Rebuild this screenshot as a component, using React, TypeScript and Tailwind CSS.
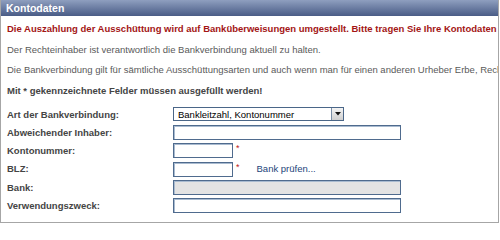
const font = { fontFamily: '"Liberation Sans", Arial, sans-serif' };

function Field({ width, disabled }: { width: string; disabled?: boolean }) {
  return (
    <div
      className={`h-[15px] ${width} border border-[#4f6b8e] shadow-[inset_1px_1px_0_#a9bbd0] ${
        disabled ? 'bg-[#e3e3e3]' : 'bg-white'
      }`}
    />
  );
}

function Star() {
  return <span className="ml-[3px] -mt-[4px] text-[9px] leading-none text-[#c02020]">*</span>;
}

const rows: { label: string; field: React.ReactNode }[] = [
  {
    label: 'Art der Bankverbindung:',
    field: (
      <div className="flex h-[14px] w-[171px] items-center border border-[#4a6688] bg-white">
        <span className="flex-1 pl-[4px] text-[9.5px] leading-none text-black">Bankleitzahl, Kontonummer</span>
        <span className="flex h-full w-[12px] items-center justify-center border-l border-[#7a8ea6] bg-gradient-to-b from-[#f4f4f4] to-[#cfcfcf]">
          <svg width="6" height="4" viewBox="0 0 6 4">
            <path d="M0 0h6L3 3.5z" fill="#111" />
          </svg>
        </span>
      </div>
    ),
  },
  { label: 'Abweichender Inhaber:', field: <Field width="w-[228px]" /> },
  {
    label: 'Kontonummer:',
    field: (
      <div className="flex items-center">
        <Field width="w-[60px]" />
        <Star />
      </div>
    ),
  },
  {
    label: 'BLZ:',
    field: (
      <div className="flex items-center">
        <Field width="w-[60px]" />
        <Star />
        <span className="ml-[17px] text-[9.5px] leading-none text-[#24447a]">Bank prüfen...</span>
      </div>
    ),
  },
  { label: 'Bank:', field: <Field width="w-[228px]" disabled /> },
  { label: 'Verwendungszweck:', field: <Field width="w-[228px]" /> },
];

export default function App() {
  return (
    <div className="h-[223px] w-[500px] bg-white" style={font}>
      <div className="h-[223px] w-[499px] border border-t-0 border-[#a6a6a6] bg-white">
        <div className="flex h-[16px] items-center bg-gradient-to-b from-[#8f9fbf] to-[#4a5c86] pl-[5px]">
          <span className="text-[10.5px] font-bold leading-none text-white">Kontodaten</span>
        </div>

        <div className="mt-[3px] overflow-hidden whitespace-nowrap pl-[6px] text-[9.5px] leading-[20.7px]">
          <p className="font-bold text-[#a31515]">
            Die Auszahlung der Ausschüttung wird auf Banküberweisungen umgestellt. Bitte tragen Sie Ihre Kontodaten ein.
          </p>
          <p className="text-[#5a5a5a]">Der Rechteinhaber ist verantwortlich die Bankverbindung aktuell zu halten.</p>
          <p className="text-[#5a5a5a]">
            Die Bankverbindung gilt für sämtliche Ausschüttungsarten und auch wenn man für einen anderen Urheber Erbe, Rechtsnachfolger ist.
          </p>
          <p className="font-bold text-[#444]">Mit * gekennzeichnete Felder müssen ausgefüllt werden!</p>
        </div>

        <div className="mt-[5px] flex flex-col gap-[3.3px] pl-[6px]">
          {rows.map(row => (
            <div key={row.label} className="grid h-[15px] grid-cols-[166px_1fr] items-center">
              <span className="text-[9.5px] font-bold leading-none text-[#444]">{row.label}</span>
              {row.field}
            </div>
          ))}
        </div>
      </div>
    </div>
  );
}
